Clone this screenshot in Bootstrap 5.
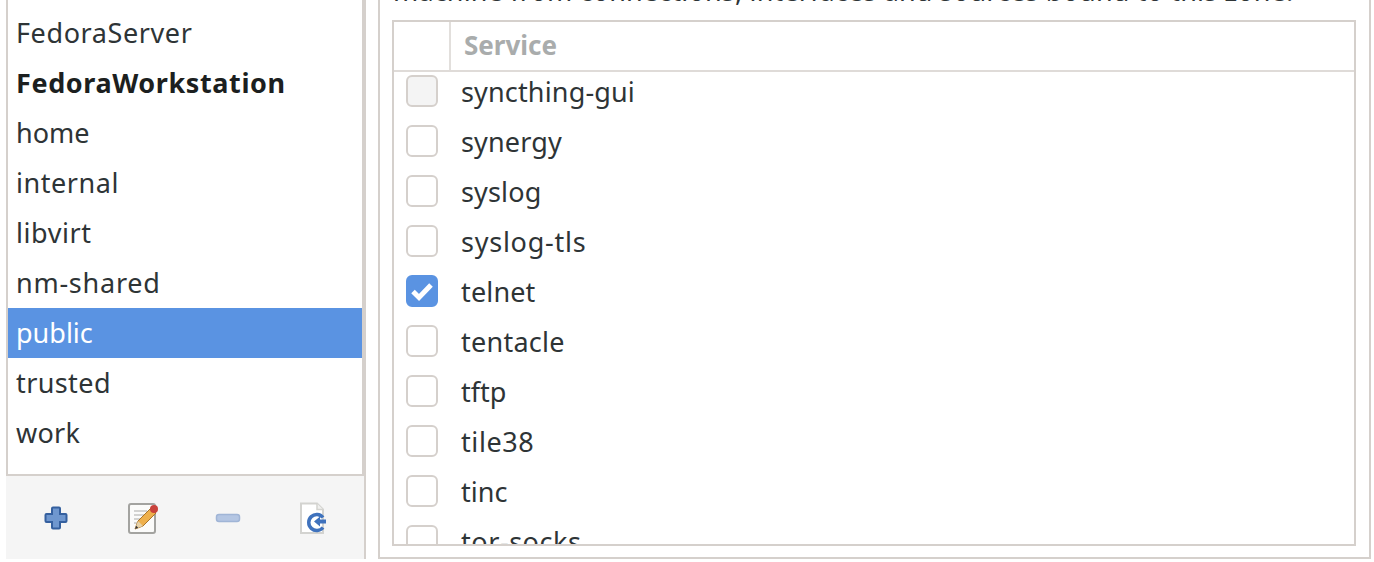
<!DOCTYPE html>
<html lang="en">
<head>
<meta charset="utf-8">
<title>Firewall zones</title>
<link href="https://cdn.jsdelivr.net/npm/bootstrap@5.3.0/dist/css/bootstrap.min.css" rel="stylesheet">
<style>
html,body{height:562px;overflow:hidden;background:#fff}
body{font-family:"Noto Sans","DejaVu Sans",sans-serif;font-size:27px;color:#2e3436;line-height:50px}
.stage{height:562px;padding:0 3px 3px 6px;gap:12px}
.zonepane{width:360px;flex:none;border-right:2px solid #d5d0cc}
.zonelist{height:476px;border:solid #d5d0cc;border-width:0 2px 2px 2px;padding-top:8px;background:#fff}
.zonerow{height:50px;padding-left:8px;line-height:50px}
.zonerow.picked{background:#5a93e2;color:#fff}
.zonerow.strong{font-weight:700;color:#1c1f20}
.zonetools{height:83px;background:#f5f5f5;padding-left:9px}
.toolslot{width:85px}
.plusicon{margin-right:3px}
.penicon{margin-left:2px}
.svcframe{border:solid #d5d0cc;border-width:0 2px 2px 2px;padding:0 13px 11px 12px;min-width:0;overflow:hidden}
.cliptext{height:20px;overflow:hidden;white-space:nowrap;letter-spacing:.165px}
.cliptext span{display:block;line-height:32px;margin-top:-25px;padding-left:1px}
.svctable{border:2px solid #d5d0cc;height:526px;overflow:hidden;background:#fff}
.svchead{height:50px;border-bottom:2px solid #dfdbd8;flex:none}
.svccheckhead{width:57px;border-right:2px solid #e2dfdc}
.svctitle{font-weight:700;color:#a9acac;padding-left:13px;font-size:26px;line-height:46px}
.svcrows{margin-top:-5px}
.svcrow{height:50px;line-height:50px;padding-left:12px;gap:23px}
.tick{width:32px;height:32px;border:2px solid #d5d0cc;border-radius:6px;background:#fff;flex:none;margin-top:-2px}
.tick.dim{background:#f4f4f4}
.tick.on{background:#5a93e2;border-color:#5a93e2}
.tick svg{display:block}
.sp2{letter-spacing:.15px}
.sp3{letter-spacing:.25px}
.sp4{letter-spacing:.4px}
.sp5{letter-spacing:.55px}
.sp6{letter-spacing:.6px}
.sp7{letter-spacing:.75px}
</style>
</head>
<body>
<div class="stage d-flex">
  <div class="zonepane d-flex flex-column">
    <div class="zonelist">
      <div class="zonerow sp6">FedoraServer</div>
      <div class="zonerow strong sp6">FedoraWorkstation</div>
      <div class="zonerow">home</div>
      <div class="zonerow sp5">internal</div>
      <div class="zonerow sp5">libvirt</div>
      <div class="zonerow sp7">nm-shared</div>
      <div class="zonerow picked">public</div>
      <div class="zonerow sp4">trusted</div>
      <div class="zonerow sp3">work</div>
    </div>
    <div class="zonetools d-flex align-items-center">
      <div class="toolslot d-flex justify-content-center">
        <svg class="plusicon" width="28" height="28" viewBox="0 0 28 28"><path d="M11 3.500h6a1 1 0 0 1 1 1V10h5.500a1 1 0 0 1 1 1v6a1 1 0 0 1-1 1H18v5.500a1 1 0 0 1-1 1h-6a1 1 0 0 1-1-1V18H4.500a1 1 0 0 1-1-1v-6a1 1 0 0 1 1-1H10V4.500a1 1 0 0 1 1-1z" fill="#6f97cf" stroke="#35609f" stroke-width="2"/></svg>
      </div>
      <div class="toolslot d-flex justify-content-center">
        <svg class="penicon" width="34" height="34" viewBox="0 0 34 34"><rect x="2" y="3" width="26" height="29" rx="2" fill="#fbfbfa" stroke="#a3a3a0" stroke-width="2"/><path d="M7 10h13M7 14h11M7 18h8M7 22h6" stroke="#c6c6c4" stroke-width="1.500"/><path d="M8 28l3-8L24 7l5 5-13 13z" fill="#eeb04c" stroke="#a9742a" stroke-width="1"/><path d="M8 28l3-8 5 5z" fill="#e7d2a8"/><path d="M8 28l1.200-3.200 2 2z" fill="#333"/><circle cx="27" cy="8" r="4" fill="#c9423c"/></svg>
      </div>
      <div class="toolslot d-flex justify-content-center">
        <svg width="28" height="28" viewBox="0 0 28 28"><rect x="2.500" y="10.500" width="23" height="7" rx="2.500" fill="#b4c6e3" stroke="#a0b5d6" stroke-width="1.500"/></svg>
      </div>
      <div class="toolslot d-flex justify-content-center">
        <svg width="30" height="34" viewBox="0 0 30 34"><path d="M3 2.500h16l6 6V32H3z" fill="#fff" stroke="#d3d3d0" stroke-width="2"/><path d="M19 2.500v6h6" fill="#f0f0ee" stroke="#d3d3d0" stroke-width="1.500"/><path d="M25 16.500a8 8 0 1 0 0 10" fill="none" stroke="#3f72bd" stroke-width="3.500"/><path d="M16 20.500l6-5v3h6v4h-6v3z" fill="#3f72bd"/></svg>
      </div>
    </div>
  </div>
  <div class="svcframe flex-grow-1">
    <div class="cliptext"><span>machine from connections, interfaces and sources bound to this zone.</span></div>
    <div class="svctable d-flex flex-column">
      <div class="svchead d-flex">
        <div class="svccheckhead"></div>
        <div class="svctitle">Service</div>
      </div>
      <div class="svcrows">
        <div class="svcrow d-flex align-items-center"><span class="tick dim"></span><span class="sp2">syncthing-gui</span></div>
        <div class="svcrow d-flex align-items-center"><span class="tick"></span><span class="sp2">synergy</span></div>
        <div class="svcrow d-flex align-items-center"><span class="tick"></span><span class="sp2">syslog</span></div>
        <div class="svcrow d-flex align-items-center"><span class="tick"></span><span class="sp7">syslog-tls</span></div>
        <div class="svcrow d-flex align-items-center"><span class="tick on"><svg width="28" height="28" viewBox="0 0 28 28"><path d="M5 14.500l6 6L23 8" fill="none" stroke="#fff" stroke-width="5"/></svg></span><span class="sp2">telnet</span></div>
        <div class="svcrow d-flex align-items-center"><span class="tick"></span><span class="sp3">tentacle</span></div>
        <div class="svcrow d-flex align-items-center"><span class="tick"></span><span>tftp</span></div>
        <div class="svcrow d-flex align-items-center"><span class="tick"></span><span class="sp6">tile38</span></div>
        <div class="svcrow d-flex align-items-center"><span class="tick"></span><span>tinc</span></div>
        <div class="svcrow d-flex align-items-center"><span class="tick"></span><span class="sp5">tor-socks</span></div>
      </div>
    </div>
  </div>
</div>
</body>
</html>
